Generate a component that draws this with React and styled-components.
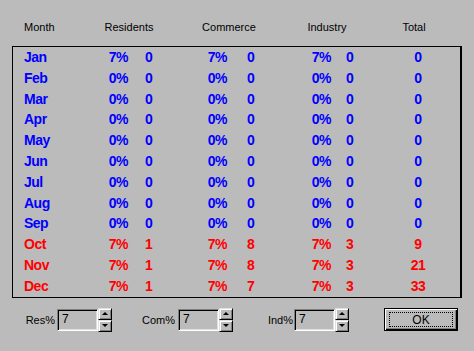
import React from "react";
import styled, { createGlobalStyle } from "styled-components";

const GlobalStyle = createGlobalStyle`
  html, body {
    margin: 0;
    padding: 0;
    background: #bbbbbb;
  }
  body {
    width: 474px;
    height: 351px;
    overflow: hidden;
    font-family: "Liberation Sans", Arial, sans-serif;
  }
`;

const Dialog = styled.div`
  width: 474px;
  height: 351px;
  padding-top: 21px;
  box-sizing: border-box;
  background: #bbbbbb;
  color: #000;
`;

const Header = styled.div`
  display: grid;
  grid-template-columns: 60px 90px 110px 86px 88px;
  padding-left: 24px;
  margin-bottom: 12px;
  font-size: 11px;
  line-height: 13px;
  span {
    text-align: center;
  }
  span:first-child {
    text-align: left;
  }
`;

const Table = styled.div`
  margin-left: 12px;
  width: 450px;
  box-sizing: border-box;
  border: 1px solid #000;
  border-right-width: 2px;
`;

const Row = styled.div`
  display: grid;
  grid-template-columns: 66px 38px 62px 37px 63px 41px 54px 66px;
  padding-left: 11px;
  height: 20.8px;
  line-height: 21px;
  font-size: 14px;
  font-weight: bold;
  letter-spacing: -0.5px;
  color: ${(p) => (p.$hot ? "#ff0000" : "#0000ff")};
  white-space: nowrap;
`;

const Pct = styled.span`
  text-align: right;
`;

const Val = styled.span`
  padding-left: ${(p) => p.$pad}px;
`;

const Total = styled.span`
  text-align: center;
`;

const Controls = styled.div`
  display: grid;
  grid-template-columns: 57px 55px 66px 55px 61px 55px 35px 74px;
  align-items: center;
  margin-top: 9px;
  height: 26px;
  font-size: 11px;
`;

const Label = styled.span`
  text-align: right;
  padding-right: ${(p) => p.$pad}px;
`;

const Spin = styled.div`
  display: flex;
  align-items: center;
`;

const Edit = styled.div`
  width: 42px;
  height: 22px;
  box-sizing: border-box;
  border: 1px solid;
  border-color: #808080 #ffffff #ffffff #808080;
  box-shadow: inset 1px 1px #000, inset -1px -1px #dfdfdf;
  padding: 2px 0 0 4px;
  font-size: 12px;
  line-height: 15px;
`;

const Arrows = styled.div`
  display: flex;
  flex-direction: column;
  width: 14px;
  height: 24px;
`;

const ArrowBtn = styled.div`
  flex: 1;
  box-sizing: border-box;
  border: 1px solid;
  border-color: #dfdfdf #000 #000 #dfdfdf;
  box-shadow: inset 1px 1px #fff, inset -1px -1px #808080;
  display: flex;
  align-items: center;
  justify-content: center;
  &::after {
    content: "";
    width: 0;
    height: 0;
    border-left: 3px solid transparent;
    border-right: 3px solid transparent;
    ${(p) =>
      p.$down
        ? "border-top: 3px solid #000;"
        : "border-bottom: 3px solid #000;"}
  }
`;

const OkButton = styled.button`
  position: relative;
  width: 74px;
  height: 23px;
  margin: 0;
  padding: 0;
  background: #bbbbbb;
  border: 1px solid #000;
  box-shadow: inset 1px 1px #fff, inset -1px -1px #000, inset -2px -2px #808080;
  font-family: "Liberation Sans", Arial, sans-serif;
  font-size: 12px;
  color: #000;
  &::after {
    content: "";
    position: absolute;
    inset: 3px 4px 3px 4px;
    border: 1px dotted #000;
  }
`;

const months = [
  ["Jan", "7%", "0", "7%", "0", "7%", "0", "0"],
  ["Feb", "0%", "0", "0%", "0", "0%", "0", "0"],
  ["Mar", "0%", "0", "0%", "0", "0%", "0", "0"],
  ["Apr", "0%", "0", "0%", "0", "0%", "0", "0"],
  ["May", "0%", "0", "0%", "0", "0%", "0", "0"],
  ["Jun", "0%", "0", "0%", "0", "0%", "0", "0"],
  ["Jul", "0%", "0", "0%", "0", "0%", "0", "0"],
  ["Aug", "0%", "0", "0%", "0", "0%", "0", "0"],
  ["Sep", "0%", "0", "0%", "0", "0%", "0", "0"],
  ["Oct", "7%", "1", "7%", "8", "7%", "3", "9", true],
  ["Nov", "7%", "1", "7%", "8", "7%", "3", "21", true],
  ["Dec", "7%", "1", "7%", "7", "7%", "3", "33", true],
];

const SpinField = ({ value }) => (
  <Spin>
    <Edit>{value}</Edit>
    <Arrows>
      <ArrowBtn />
      <ArrowBtn $down />
    </Arrows>
  </Spin>
);

const App = () => {
  return (
    <>
      <GlobalStyle />
      <Dialog>
        <Header>
          <span>Month</span>
          <span>Residents</span>
          <span>Commerce</span>
          <span>Industry</span>
          <span>Total</span>
        </Header>

        <Table>
          {months.map((m) => (
            <Row key={m[0]} $hot={m[8]}>
              <span>{m[0]}</span>
              <Pct>{m[1]}</Pct>
              <Val $pad={17}>{m[2]}</Val>
              <Pct>{m[3]}</Pct>
              <Val $pad={20}>{m[4]}</Val>
              <Pct>{m[5]}</Pct>
              <Val $pad={15}>{m[6]}</Val>
              <Total>{m[7]}</Total>
            </Row>
          ))}
        </Table>

        <Controls>
          <Label $pad={2}>Res%</Label>
          <SpinField value="7" />
          <Label $pad={3}>Com%</Label>
          <SpinField value="7" />
          <Label $pad={1}>Ind%</Label>
          <SpinField value="7" />
          <span />
          <OkButton>OK</OkButton>
        </Controls>
      </Dialog>
    </>
  );
};

export default App;
